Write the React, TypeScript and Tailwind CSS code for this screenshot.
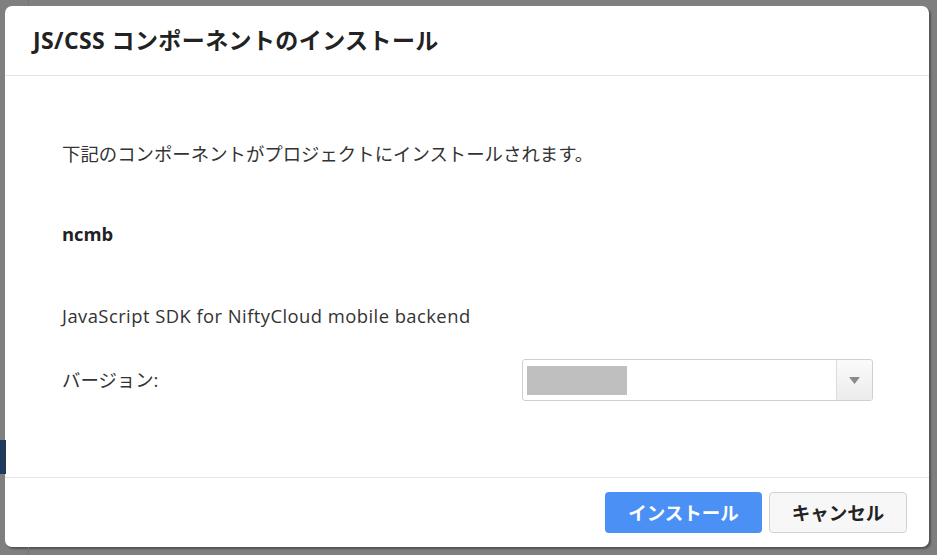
import React from 'react';

const font = { fontFamily: '"Open Sans", "Noto Sans CJK JP", sans-serif' };

const VersionSelect: React.FC = () => (
  <div className="flex h-[42px] w-[351px] rounded-[3px] border border-[#cfcfcf] bg-white">
    <div className="flex flex-1 items-center pl-[4px]">
      <div className="h-[29px] w-[100px] bg-[#bfbfbf]" />
    </div>
    <div className="flex w-[36px] items-center justify-center border-l border-[#dcdcdc] bg-gradient-to-b from-[#fbfbfb] to-[#ececec] rounded-r-[3px]">
      <svg width="11" height="7" viewBox="0 0 11 7">
        <path d="M0 0 H11 L5.5 7 Z" fill="#8a8a8a" />
      </svg>
    </div>
  </div>
);

export default function App() {
  return (
    <div className="relative h-[555px] w-[937px] overflow-hidden bg-[#7f7f7f]" style={font}>
      <div className="absolute left-0 top-[440px] h-[34px] w-[6px] bg-[#1f3a5c]" />
      <div className="absolute left-[28px] top-0 h-[6px] w-px bg-[#747474]" />
      <div className="absolute left-[28px] bottom-0 h-[8px] w-px bg-[#747474]" />
      <div className="flex h-full w-full pl-[5px] pt-[6px] pr-[8px] pb-[8px]">
        <div className="flex flex-1 flex-col rounded-[7px] bg-white shadow-[2px_2px_2px_rgba(0,0,0,0.35)]">
          <div className="flex h-[70px] shrink-0 items-center border-b border-[#e3e3e3] pl-[28px] pb-[1px]">
            <h1 className="text-[23px] font-bold leading-none tracking-[0.4px] text-[#222]">JS/CSS コンポーネントのインストール</h1>
          </div>
          <div className="flex flex-1 flex-col pl-[57px] pr-[56px] pt-[66px] text-[18.4px] leading-[24px] text-[#333]">
            <p>下記のコンポーネントがプロジェクトにインストールされます。</p>
            <p className="mt-[56px] font-bold text-[#222]">ncmb</p>
            <p className="mt-[58px] tracking-[0.45px]">JavaScript SDK for NiftyCloud mobile backend</p>
            <div className="mt-[31px] flex items-center justify-between">
              <span>バージョン:</span>
              <VersionSelect />
            </div>
          </div>
          <div className="flex h-[70px] shrink-0 items-center justify-end gap-[7px] border-t border-[#e6e6e6] pr-[22px]">
            <button className="h-[41px] w-[157px] rounded-[4px] bg-[#4a90f5] text-[18.5px] font-bold text-white">
              インストール
            </button>
            <button className="h-[41px] w-[138px] rounded-[4px] border border-[#d2d2d2] bg-[#f7f7f7] text-[18.5px] font-bold text-[#222]">
              キャンセル
            </button>
          </div>
        </div>
      </div>
    </div>
  );
}
